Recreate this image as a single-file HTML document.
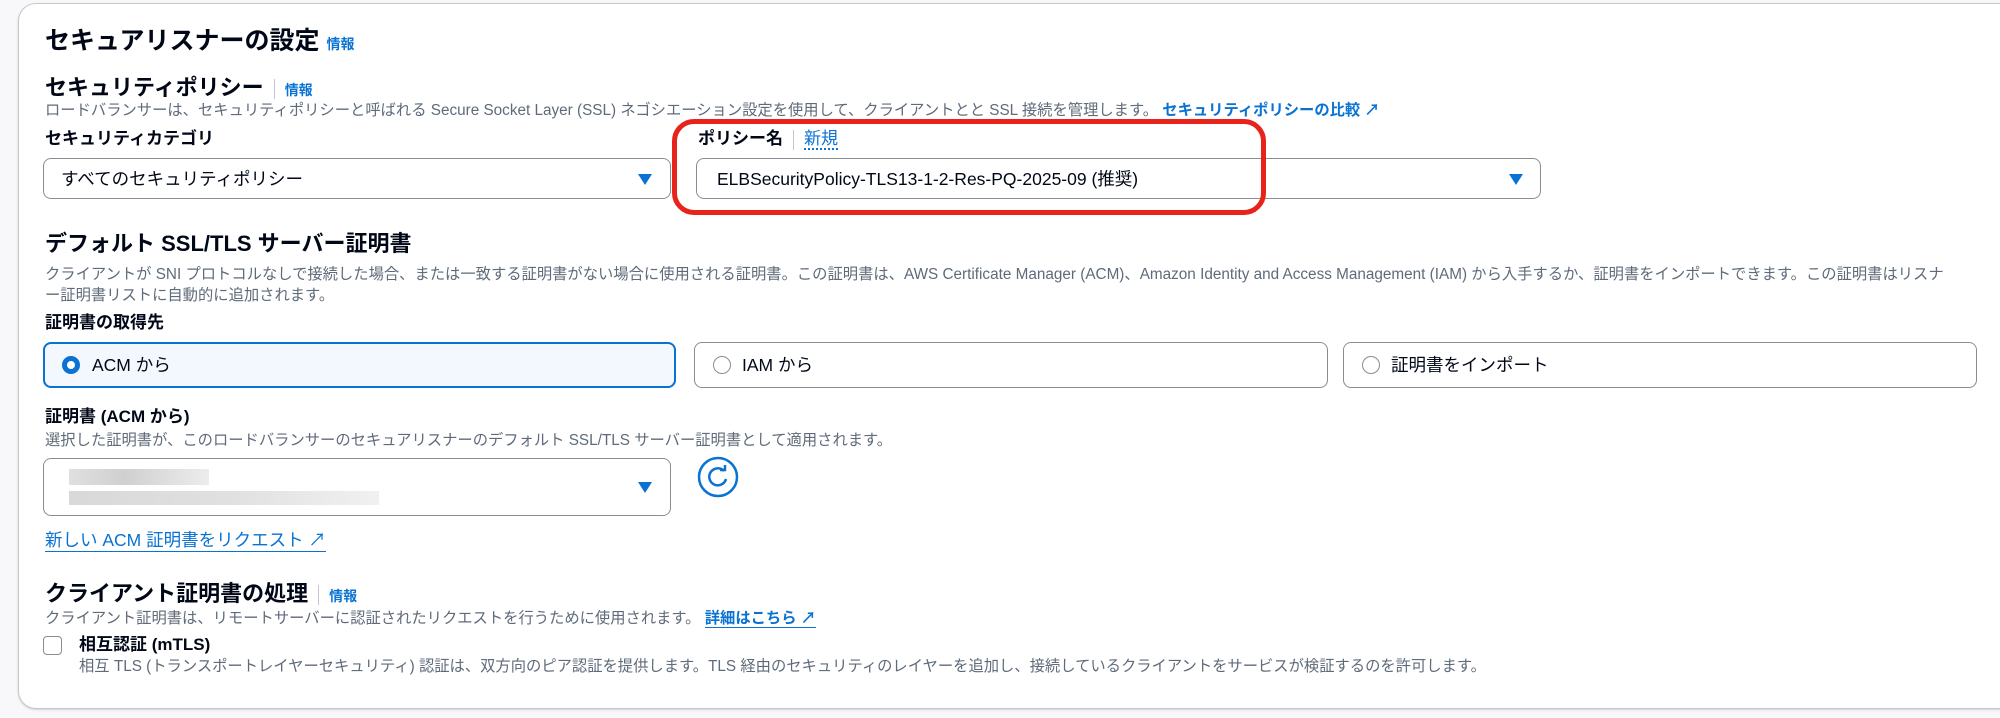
<!DOCTYPE html>
<html><head><meta charset="utf-8"><style>
*{box-sizing:border-box;margin:0;padding:0}
body{width:2000px;height:718px;background:#f8f8fa;font-family:"Liberation Sans","Noto Sans CJK JP",sans-serif;color:#000716;position:relative;overflow:hidden}
.card{position:absolute;left:18px;top:3px;width:2010px;height:706px;background:#fff;border:1px solid #c6c6cd;border-radius:18px;box-shadow:0 1px 2px rgba(0,0,0,.15)}
.a{position:absolute;white-space:nowrap}
.h1{font-size:25px;font-weight:700;line-height:30px}
.h2{font-size:22px;font-weight:700;line-height:28px}
.lb{font-size:17px;font-weight:700;line-height:22px}
.d{font-size:15.3px;color:#5f6b7a;line-height:20px}
.info{font-size:14px;color:#0972d3;font-weight:700}
.lnk{color:#0972d3}
.sep{display:inline-block;width:1px;height:20px;background:#c6c6cd;vertical-align:middle;margin:0 10px}
.sel{position:absolute;border:1px solid #8c8c94;border-radius:8px;background:#fff;font-size:17.5px;line-height:22px}
.arr{position:absolute;width:0;height:0;border-left:7px solid transparent;border-right:7px solid transparent;border-top:11px solid #0972d3}
.tile{position:absolute;top:342px;height:46px;border:1px solid #8c8c94;border-radius:8px;font-size:17.5px;line-height:22px}
.rad{position:absolute;left:18px;top:13px;width:18px;height:18px;border-radius:50%;border:1.5px solid #8c8c94;background:#fff}
</style></head><body>
<div class="card"></div>
<div class="a h1" style="left:45px;top:26px">セキュアリスナーの設定 <span class="info">情報</span></div>
<div class="a h2" style="left:45px;top:74px">セキュリティポリシー<span class="sep"></span><span class="info">情報</span></div>
<div class="a d" style="left:45px;top:101px">ロードバランサーは、セキュリティポリシーと呼ばれる Secure Socket Layer (SSL) ネゴシエーション設定を使用して、クライアントとと SSL 接続を管理します。 <span class="lnk" style="font-weight:700">セキュリティポリシーの比較 ↗</span></div>
<div class="a lb" style="left:45px;top:128px">セキュリティカテゴリ</div>
<div class="sel" style="left:43px;top:158px;width:628px;height:41px"><span class="a" style="left:17px;top:9px">すべてのセキュリティポリシー</span><div class="arr" style="left:594px;top:15px"></div></div>
<div class="a lb" style="left:698px;top:128px">ポリシー名<span class="sep"></span><span class="lnk" style="font-weight:400;border-bottom:2px dotted #0972d3">新規</span></div>
<div class="sel" style="left:696px;top:158px;width:845px;height:41px"><span class="a" style="left:20px;top:9px">ELBSecurityPolicy-TLS13-1-2-Res-PQ-2025-09 (推奨)</span><div class="arr" style="left:812px;top:15px"></div></div>
<div class="a" style="left:672px;top:119px;width:594px;height:96px;border:5px solid #e8231b;border-radius:22px"></div>
<div class="a h2" style="left:45px;top:230px">デフォルト SSL/TLS サーバー証明書</div>
<div class="a d" style="left:45px;top:264px;white-space:normal;width:1905px;line-height:21px">クライアントが SNI プロトコルなしで接続した場合、または一致する証明書がない場合に使用される証明書。この証明書は、AWS Certificate Manager (ACM)、Amazon Identity and Access Management (IAM) から入手するか、証明書をインポートできます。この証明書はリスナー証明書リストに自動的に追加されます。</div>
<div class="a lb" style="left:45px;top:312px">証明書の取得先</div>
<div class="tile" style="left:43px;width:633px;border:2px solid #0972d3;background:#f2f8fd"><div class="rad" style="left:17px;top:12px;border:5px solid #0972d3"></div><span class="a" style="left:47px;top:10px">ACM から</span></div>
<div class="tile" style="left:694px;width:634px"><div class="rad"></div><span class="a" style="left:47px;top:11px">IAM から</span></div>
<div class="tile" style="left:1343px;width:634px"><div class="rad"></div><span class="a" style="left:47px;top:11px">証明書をインポート</span></div>
<div class="a lb" style="left:45px;top:406px">証明書 (ACM から)</div>
<div class="a d" style="left:45px;top:431px">選択した証明書が、このロードバランサーのセキュアリスナーのデフォルト SSL/TLS サーバー証明書として適用されます。</div>
<div class="sel" style="left:43px;top:458px;width:628px;height:58px">
<div class="a" style="left:25px;top:10px;width:140px;height:16px;background:linear-gradient(90deg,#d8d8d8,#c4c4c4 40%,#e8e8e8);opacity:.8"></div>
<div class="a" style="left:25px;top:32px;width:310px;height:14px;background:linear-gradient(90deg,#cfcfcf,#d8d8d8 50%,#ededed);opacity:.8"></div>
<div class="arr" style="left:594px;top:23px"></div></div>
<svg class="a" style="left:697px;top:456px" width="42" height="42" viewBox="0 0 42 42"><circle cx="21" cy="21" r="19" fill="none" stroke="#0972d3" stroke-width="2.5"/><path d="M27 15 A8.5 8.5 0 1 0 29 23" fill="none" stroke="#0972d3" stroke-width="2.5"/><path d="M23 14 L28 14 L28 9" fill="none" stroke="#0972d3" stroke-width="2.5"/></svg>
<div class="a" style="left:45px;top:529px;font-size:17.5px;line-height:22px;color:#0972d3;border-bottom:1.5px solid #0972d3">新しい ACM 証明書をリクエスト ↗</div>
<div class="a h2" style="left:45px;top:580px">クライアント証明書の処理<span class="sep"></span><span class="info">情報</span></div>
<div class="a d" style="left:45px;top:609px">クライアント証明書は、リモートサーバーに認証されたリクエストを行うために使用されます。 <span class="lnk" style="font-weight:700;border-bottom:1.5px solid #0972d3">詳細はこちら ↗</span></div>
<div class="a" style="left:43px;top:636px;width:19px;height:19px;border:1.5px solid #8c8c94;border-radius:4px"></div>
<div class="a lb" style="left:79px;top:634px">相互認証 (mTLS)</div>
<div class="a d" style="left:79px;top:657px">相互 TLS (トランスポートレイヤーセキュリティ) 認証は、双方向のピア認証を提供します。TLS 経由のセキュリティのレイヤーを追加し、接続しているクライアントをサービスが検証するのを許可します。</div>
</body></html>
